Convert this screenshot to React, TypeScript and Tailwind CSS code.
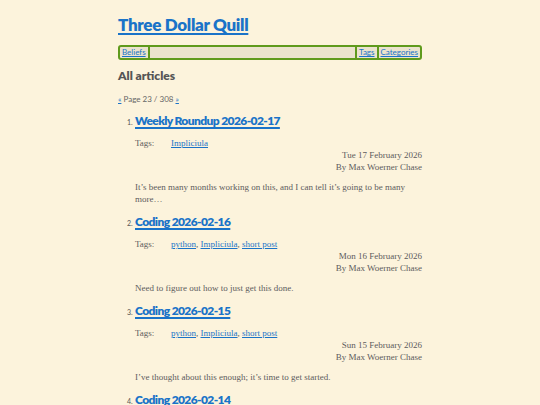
import React from "react";

const posts = [
  {
    title: "Weekly Roundup 2026-02-17",
    tags: ["Impliciula"],
    date: "Tue 17 February 2026",
    summary: "It’s been many months working on this, and I can tell it’s going to be many more…",
  },
  {
    title: "Coding 2026-02-16",
    tags: ["python", "Impliciula", "short post"],
    date: "Mon 16 February 2026",
    summary: "Need to figure out how to just get this done.",
  },
  {
    title: "Coding 2026-02-15",
    tags: ["python", "Impliciula", "short post"],
    date: "Sun 15 February 2026",
    summary: "I’ve thought about this enough; it’s time to get started.",
  },
  {
    title: "Coding 2026-02-14",
    tags: ["python", "Impliciula", "short post"],
    date: "Sat 14 February 2026",
    summary: "More work.",
  },
];

const sans = "font-['Lato','Open_Sans',sans-serif]";
const serif = "font-['Liberation_Serif','DejaVu_Serif',serif]";

export default function App() {
  return (
    <div className="h-[405px] overflow-hidden bg-[#fcf3dc] text-[#555]">
      <div className="mx-auto w-[304px] pt-[17px]">
        <h1 className={`${sans} text-[17px] leading-[16px] h-[16px] font-extrabold tracking-[-0.3px]`}>
          <a href="#" className="text-[#1a73c8] underline decoration-[1.5px] underline-offset-[2px]">
            Three Dollar Quill
          </a>
        </h1>
        <nav
          className={`${sans} mt-[12px] flex h-[15px] items-stretch rounded-[3px] border-2 border-[#5f9a1c] bg-[#ebe3cd] text-[8px] leading-[11px]`}
        >
          <a href="#" className="border-r-2 border-[#5f9a1c] px-[2px] text-[#1a73c8] underline">
            Beliefs
          </a>
          <div className="flex-1" />
          <a href="#" className="border-l-2 border-[#5f9a1c] px-[2px] text-[#1a73c8] underline">
            Tags
          </a>
          <a href="#" className="border-l-2 border-[#5f9a1c] px-[2px] text-[#1a73c8] underline">
            Categories
          </a>
        </nav>
        <h2 className={`${sans} mt-[8px] text-[12px] leading-[16px] font-extrabold text-[#555]`}>All articles</h2>
        <div className={`${sans} mt-[9px] text-[8px] leading-[12px] text-[#666]`}>
          <a href="#" className="text-[#1a73c8] underline">«</a> Page 23 / 308{" "}
          <a href="#" className="text-[#1a73c8] underline">»</a>
        </div>
        <ol className="mt-[8px] pl-[17px]">
          {posts.map((p, i) => (
            <li key={i} className="mb-[9px]">
              <div className="flex items-baseline h-[16px]">
                <span className={`${sans} w-[0px] text-[7px] text-[#555] -ml-[8px] mr-[8px] whitespace-nowrap`}>
                  {i + 1}.
                </span>
                <a
                  href="#"
                  className={`${sans} text-[12px] leading-[16px] font-extrabold tracking-[-0.6px] text-[#1a73c8] underline decoration-[1.5px] underline-offset-[2px]`}
                >
                  {p.title}
                </a>
              </div>
              <div className={`${serif} mt-[8px] text-[9px] leading-[12px] text-[#5c5c5c]`}>
                <div className="flex">
                  <span className="w-[36px]">Tags:</span>
                  <span>
                    {p.tags.map((t, j) => (
                      <React.Fragment key={t}>
                        <a href="#" className="text-[#1a73c8] underline">
                          {t}
                        </a>
                        {j < p.tags.length - 1 ? ", " : ""}
                      </React.Fragment>
                    ))}
                  </span>
                </div>
                <div className="text-right">{p.date}</div>
                <div className="text-right">By Max Woerner Chase</div>
                <p className="mt-[8px]">{p.summary}</p>
              </div>
            </li>
          ))}
        </ol>
      </div>
    </div>
  );
}
